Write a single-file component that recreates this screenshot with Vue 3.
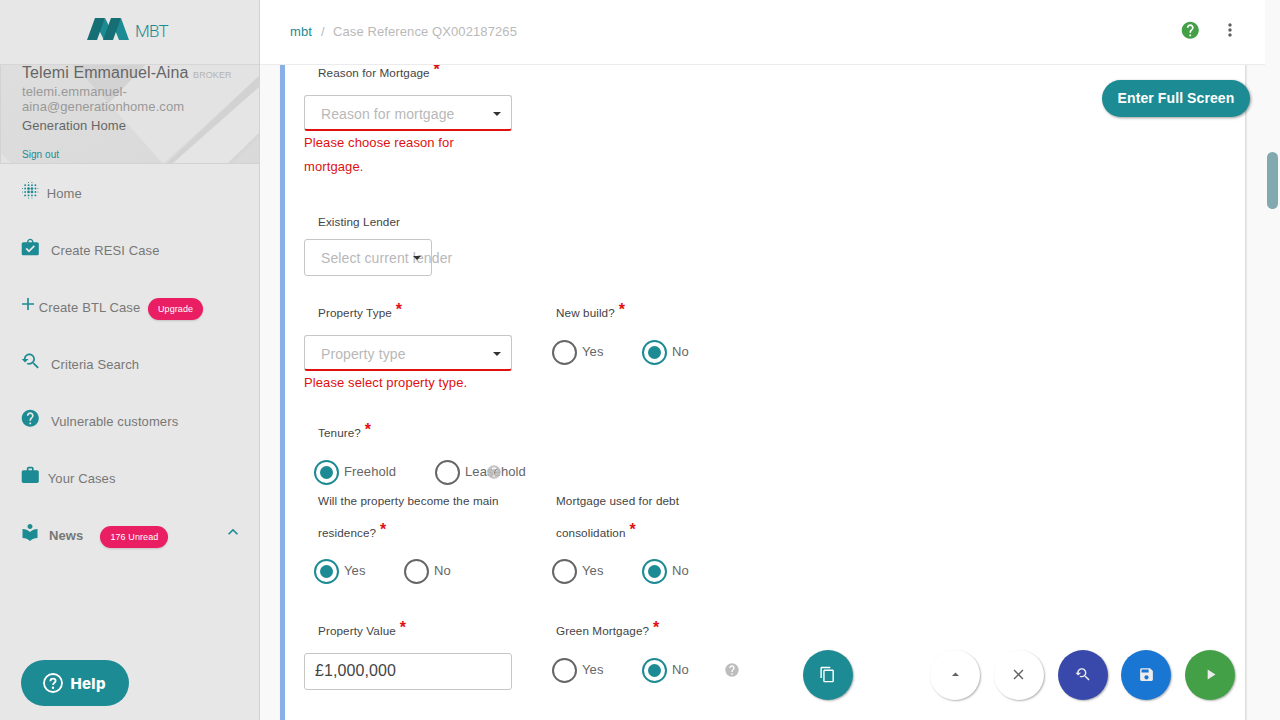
<script setup>
import { h } from 'vue'

const paths = {
  help: 'M12 2C6.48 2 2 6.48 2 12s4.48 10 10 10 10-4.48 10-10S17.52 2 12 2zm1 17h-2v-2h2v2zm2.07-7.75l-.9.92C13.45 12.9 13 13.5 13 15h-2v-.5c0-1.1.45-2.1 1.17-2.83l1.24-1.26c.37-.36.59-.86.59-1.41 0-1.1-.9-2-2-2s-2 .9-2 2H8c0-2.21 1.79-4 4-4s4 1.79 4 4c0 .88-.36 1.68-.93 2.25z',
  copy: 'M16 1H4c-1.1 0-2 .9-2 2v14h2V3h12V1zm3 4H8c-1.1 0-2 .9-2 2v14c0 1.1.9 2 2 2h11c1.1 0 2-.9 2-2V7c0-1.1-.9-2-2-2zm0 16H8V7h11v14z',
  close: 'M19 6.41L17.59 5 12 10.59 6.41 5 5 6.41 10.59 12 5 17.59 6.41 19 12 13.41 17.59 19 19 17.59 13.41 12z',
  save: 'M17 3H5c-1.11 0-2 .9-2 2v14c0 1.1.89 2 2 2h14c1.1 0 2-.9 2-2V7l-4-4zm-5 16c-1.66 0-3-1.34-3-3s1.34-3 3-3 3 1.34 3 3-1.34 3-3 3zm3-10H5V5h10v4z',
  play: 'M8 5v14l11-7z',
  up: 'M7 14l5-5 5 5z',
  more: 'M12 8c1.1 0 2-.9 2-2s-.9-2-2-2-2 .9-2 2 .9 2 2 2zm0 2c-1.1 0-2 .9-2 2s.9 2 2 2 2-.9 2-2-.9-2-2-2zm0 6c-1.1 0-2 .9-2 2s.9 2 2 2 2-.9 2-2-.9-2-2-2z',
  work: 'M20 6h-4V4c0-1.11-.89-2-2-2h-4c-1.11 0-2 .89-2 2v2H4c-1.11 0-1.99.89-1.99 2L2 19c0 1.11.89 2 2 2h16c1.11 0 2-.89 2-2V8c0-1.11-.89-2-2-2zm-6 0h-4V4h4v2z',
  workCheck: 'M20 6h-4.1C15.6 3.7 14 2 12 2S8.400 3.700 8.100 6H4c-1.100 0-2 .9-2 2v11.500c0 1.100.9 2 2 2h16c1.100 0 2-.9 2-2V8c0-1.100-.9-2-2-2zM12 3.600c1.100 0 2 .9 2.200 2.400H9.800C10 4.500 10.900 3.600 12 3.600zM10.500 18L6.500 14l1.400-1.400 2.600 2.600 5.600-5.600L17.500 11z',
  library: 'M12 11.550C9.640 9.350 6.480 8 3 8v11c3.480 0 6.640 1.350 9 3.550 2.360-2.190 5.520-3.550 9-3.550V8c-3.480 0-6.640 1.350-9 3.550zM12 8c1.660 0 3-1.340 3-3s-1.340-3-3-3-3 1.340-3 3 1.340 3 3 3z',
  less: 'M12 8l-6 6 1.410 1.410L12 10.830l4.590 4.580L18 14z',
  add: 'M20 13.100h-6.900V20h-2.200v-6.900H4v-2.200h6.900V4h2.200v6.900H20z',
  search: 'M17.01 14h-.8l-.27-.27c.98-1.14 1.57-2.61 1.57-4.23 0-3.59-2.91-6.5-6.5-6.5s-6.5 3-6.5 6.5H2l3.84 4 4.16-4H6.51C6.51 7 8.53 5 11.01 5s4.500 2.010 4.500 4.500c0 2.480-2.020 4.500-4.500 4.500-.65 0-1.260-.14-1.820-.38L7.710 15.100c.97.57 2.090.9 3.300.9 1.610 0 3.080-.59 4.220-1.570l.27.27v.79l5.010 4.990L22 19l-4.990-5z'
}

const blurDots = []
const axis = [3, 6, 10, 14, 18, 21]
axis.forEach((x, i) => axis.forEach((y, j) => {
  const ei = i === 0 || i === 5
  const ej = j === 0 || j === 5
  const mi = i === 2 || i === 3
  const mj = j === 2 || j === 3
  if ((ei && ej) || (ei && !mj) || (ej && !mi)) return
  blurDots.push({ x, y, r: ei || ej ? 0.6 : mi && mj ? 1.6 : 1.1 })
}))

const Icon = (props) => h('svg', { viewBox: '0 0 24 24', class: 'icon', 'aria-hidden': 'true' },
  props.name === 'blur'
    ? blurDots.map((d) => h('circle', { cx: d.x, cy: d.y, r: d.r }))
    : [h('path', { d: paths[props.name], 'fill-rule': 'evenodd' })])
Icon.props = ['name']

const Radio = (props) => h('span', { class: ['radio', { on: props.on }] }, [h('i'), h('span', props.text)])
Radio.props = { on: Boolean, text: String }

const nav = [
  { icon: 'blur', text: 'Home', gap: 6 },
  { icon: 'workCheck', text: 'Create RESI Case', gap: 10.2 },
  { icon: 'add', text: 'Create BTL Case', gap: 1.5, badge: 'Upgrade' },
  { icon: 'search', text: 'Criteria Search', gap: 10.2 },
  { icon: 'help', text: 'Vulnerable customers', gap: 10.2 },
  { icon: 'work', text: 'Your Cases', gap: 7 },
  { icon: 'library', text: 'News', gap: 9.5, badge: '176 Unread', open: true }
]
</script>

<template>
  <div class="app">
    <aside class="side">
      <div class="brand">
        <svg class="logo" viewBox="0 0 42 22">
          <path fill="#1c8b93" d="M18 0L22 8L17 22L12 12zM34 0L42 22H32L28 12z" />
          <path fill="#176f76" d="M8 0H18L10 22H0zM24 0H34L26 22H16z" />
        </svg>
        <span>MBT</span>
      </div>
      <div class="profile">
        <svg class="profile-bg" viewBox="0 0 259 99" preserveAspectRatio="none">
          <defs>
            <linearGradient id="pg" x1="0" y1="0" x2="1" y2="1">
              <stop offset="0" stop-color="#dedede" /><stop offset="1" stop-color="#d9d9d9" />
            </linearGradient>
          </defs>
          <rect width="259" height="99" fill="url(#pg)" />
          <path fill="#e3e3e3" d="M145 0H259V11L163 99L109 38z" />
          <path fill="#d3d3d3" d="M73 0H145L109 38z" />
          <path fill="#d2d2d2" d="M166 99L259 11V22L172 99z" />
          <path fill="#e5e5e5" d="M172 99L259 22V68L227 99z" />
          <path fill="#d6d6d6" d="M227 99L259 68V72L232 99z" />
          <path fill="#e3e3e3" d="M0 87L12 99H0z" />
          <path fill="none" stroke="#d2d2d2" d="M0 98.500H259M.5 0V99" />
        </svg>
        <div class="name">Telemi Emmanuel-Aina <small>BROKER</small></div>
        <div class="email">telemi.emmanuel-<br>aina@generationhome.com</div>
        <div class="company">Generation Home</div>
        <div class="signout">Sign out</div>
      </div>
      <nav>
        <div v-for="n in nav" :key="n.text" class="nav-row" :class="[n.icon, { open: n.open }]">
          <Icon :name="n.icon" />
          <span class="nav-text" :style="{ marginLeft: n.gap + 'px' }">{{ n.text }}</span>
          <span v-if="n.badge" class="badge">{{ n.badge }}</span>
          <Icon v-if="n.open" name="less" class="chev" />
        </div>
      </nav>
      <div class="help-btn">
        <svg viewBox="0 0 20 20"><circle cx="10" cy="10" r="9" /><path d="M7.400 8.200C7.400 6.600 8.500 5.700 10 5.700S12.600 6.700 12.600 8C12.600 9.800 10 9.900 10 12" /><circle class="dot" cx="10" cy="14.800" r="1.200" /></svg>
        <span>Help</span>
      </div>
    </aside>

    <div class="main">
      <header class="top">
        <span class="crumb">mbt</span><span class="slash">/</span><span class="ref">Case Reference QX002187265</span>
        <Icon name="help" class="top-help" />
        <Icon name="more" class="top-more" />
      </header>
      <div class="view">
        <section class="card">
          <div class="row r1">
            <div class="field">
              <label>Reason for Mortgage <b>*</b></label>
              <div class="select bad">Reason for mortgage<i class="caret"></i></div>
              <p>Please choose reason for mortgage.</p>
            </div>
          </div>
          <div class="row r2">
            <div class="field">
              <label>Existing Lender</label>
              <div class="select small">Select current lender<i class="caret"></i></div>
            </div>
          </div>
          <div class="row r3">
            <div class="field">
              <label>Property Type <b>*</b></label>
              <div class="select bad">Property type<i class="caret"></i></div>
              <p>Please select property type.</p>
            </div>
            <div class="field">
              <label>New build? <b>*</b></label>
              <div class="radios"><Radio text="Yes" /><Radio text="No" on /></div>
            </div>
          </div>
          <div class="row r4">
            <div class="field">
              <label>Tenure? <b>*</b></label>
              <div class="radios wide"><Radio text="Freehold" on /><Radio text="Leasehold" /><Icon name="help" class="hint over" /></div>
            </div>
          </div>
          <div class="row r5">
            <div class="field">
              <label>Will the property become the main residence? <b>*</b></label>
              <div class="radios tight"><Radio text="Yes" on /><Radio text="No" /></div>
            </div>
            <div class="field">
              <label class="narrow">Mortgage used for debt consolidation <b>*</b></label>
              <div class="radios tight"><Radio text="Yes" /><Radio text="No" on /></div>
            </div>
          </div>
          <div class="row r6">
            <div class="field">
              <label>Property Value <b>*</b></label>
              <div class="input">£1,000,000</div>
            </div>
            <div class="field">
              <label>Green Mortgage? <b>*</b></label>
              <div class="radios"><Radio text="Yes" /><Radio text="No" on /><Icon name="help" class="hint" /></div>
            </div>
          </div>
        </section>
      </div>
    </div>
    <div class="track"><div class="thumb"></div></div>

    <button class="full">Enter Full Screen</button>
    <div class="fabs">
      <span class="fab teal"><Icon name="copy" /></span>
      <span class="fab light"><Icon name="up" /></span>
      <span class="fab light"><Icon name="close" /></span>
      <span class="fab indigo"><Icon name="search" /></span>
      <span class="fab blue"><Icon name="save" /></span>
      <span class="fab green"><Icon name="play" /></span>
    </div>
  </div>
</template>

<style>
body { margin: 0; overflow: hidden; }
.icon { display: block; flex: none; fill: currentColor; }
.radio { display: flex; align-items: center; width: 90px; flex: none; font-size: 13px; color: #666; white-space: nowrap; }
.radio i { box-sizing: border-box; width: 25px; height: 25px; flex: none; margin-right: 5px; border: 2px solid #666; border-radius: 50%; display: flex; align-items: center; justify-content: center; }
.radio.on i { border-color: #1c8b93; }
.radio.on i::after { content: ''; width: 13px; height: 13px; border-radius: 50%; background: #1c8b93; }
.radio span { position: relative; top: -1px; }
</style>

<style scoped>
.app { position: relative; display: flex; width: 1280px; height: 720px; overflow: hidden; background: #f9f9f9; font-family: "Liberation Sans", Arial, sans-serif; font-size: 13px; letter-spacing: 0.1px; color: #666; }
.side { box-sizing: border-box; position: relative; width: 260px; flex: none; background: #e7e7e7; border-right: 1px solid #d2d2d2; }
.brand { box-sizing: border-box; height: 65px; padding: 18px 0 0 87px; display: flex; align-items: flex-start; color: #1c8b93; border-bottom: 1px solid #d6d6d6; }
.logo { width: 42px; height: 22px; }
.brand span { margin: 3px 0 0 6px; font: 300 17px/20px Roboto, "Liberation Sans", sans-serif; letter-spacing: -0.7px; }
.profile { position: relative; box-sizing: border-box; height: 99px; padding-left: 22px; overflow: hidden; }
.profile-bg { position: absolute; left: 0; top: 0; width: 259px; height: 99px; }
.profile > div { position: relative; white-space: nowrap; }
.name { font-size: 16px; line-height: 18px; margin-top: -1px; letter-spacing: 0.1px; color: #666; }
.name small { font-size: 9px; color: #b4b4b4; letter-spacing: 0.1px; }
.email { line-height: 15px; margin-top: 0; color: #999; }
.company { line-height: 18px; margin-top: 3px; }
.signout { font-size: 10px; line-height: 12px; margin-top: 14px; color: #1c8b93; letter-spacing: 0.05px; }
.nav-row { display: flex; align-items: center; height: 57px; padding-left: 20.300px; color: #777; }
.nav-row .icon { width: 20.500px; height: 20.500px; margin-top: -5px; color: #1c8b93; }
.nav-row.add .icon { width: 18px; height: 18px; margin-left: -1px; margin-top: -5px; }
.nav-row.library .icon { width: 20px; margin-left: -0.800px; }
.nav-text { position: relative; top: 1px; line-height: 16px; }
.nav-row.open .nav-text { font-weight: bold; }
.badge { margin: 5px 0 0 8px; padding: 0 10px 0 9.700px; height: 22px; line-height: 22px; border-radius: 11px; background: #e91e63; color: #fff; font-size: 9px; box-shadow: 0 1px 2px rgba(0,0,0,.15); }
.open .badge { margin-left: 17px; padding: 0 10px; }
.nav-row.open .chev { width: 20px; height: 20px; margin: -5px 16px 0 auto; }
.help-btn { position: absolute; left: 21px; top: 660px; width: 108px; height: 46px; border-radius: 23px; background: #1c8b93; color: #fff; display: flex; align-items: center; box-sizing: border-box; padding-left: 22px; font: 800 15px Inter, sans-serif; letter-spacing: 0.3px; }
.help-btn svg { width: 20px; height: 20px; margin-right: 7.500px; fill: none; stroke: #fff; stroke-width: 1.800; }
.help-btn svg .dot { fill: #fff; stroke: none; }
.main { width: 1005px; flex: none; display: flex; flex-direction: column; }
.top { box-sizing: border-box; height: 65px; flex: none; padding: 0 0 2px 30px; display: flex; align-items: center; background: #fff; border-bottom: 1px solid #ebebeb; color: #b9b9b9; }
.crumb { color: #1c8b93; }
.slash { margin: 0 8.300px 0 9px; }
.top-help { width: 20.500px; height: 20.500px; margin: -2px 20px 0 auto; color: #43a047; }
.top-more { width: 20px; height: 20px; margin: -2px 25px 0 0; color: #616161; }
.view { flex: 1; overflow: hidden; padding-left: 20px; }
.card { box-sizing: border-box; width: 965px; height: 700px; margin-top: -8px; border-left: 5px solid #8aafe6; padding-left: 19px; background: #fff; box-shadow: 1px 0 2px rgba(0,0,0,.17); }
.row { display: flex; }
.r1 { height: 149px; }
.r2 { height: 91px; }
.r3 { height: 120px; }
.r4 { height: 68px; }
.r5 { height: 130px; }
.field { width: 238px; flex: none; }
label { display: block; padding: 0 30px 0 14px; font-size: 11.700px; line-height: 32px; color: #444; }
label.narrow { padding-right: 60px; }
label b { font-size: 16px; font-weight: bold; line-height: 0; vertical-align: 2px; margin-left: 0.500px; color: #e31010; }
.select, .input { position: relative; box-sizing: border-box; width: 208px; height: 36px; margin-top: 6px; padding-left: 16px; border: 1px solid #c6c6c6; border-radius: 3px; line-height: 36px; font-size: 14px; color: #b8b8b8; white-space: nowrap; }
.select.bad { border-bottom: 2px solid #e31010; }
.select.small { width: 128px; height: 37px; margin-top: 1px; }
.caret { position: absolute; right: 10px; top: 16px; border: 4.500px solid transparent; border-top-color: #333; border-bottom: 0; }
.input { height: 37px; padding-left: 10px; line-height: 34px; font-size: 16px; color: #444; }
p { width: 190px; margin: 0; line-height: 24px; color: #e01010; }
.radios { position: relative; display: flex; align-items: center; height: 25px; margin-top: 11px; padding-left: 10px; }
.radios.tight { margin-top: 10px; }
.radios.wide .radio { width: 121px; }
.hint { width: 16px; height: 16px; margin: -1px 0 0 -8px; color: #bdbdbd; }
.hint.over { position: absolute; left: 182px; top: 4px; margin: 0; opacity: .9; }
.track { flex: 1; padding: 152px 0 0 2px; }
.thumb { width: 11px; height: 57px; border-radius: 5.500px; background: #82a8b0; }
.full { position: absolute; left: 1102px; top: 80px; width: 148px; height: 37px; padding: 0 0 2px; border: 0; border-radius: 19px; background: #1c8b93; color: #fff; font: bold 14px "Liberation Sans", Arial, sans-serif; letter-spacing: 0.1px; box-shadow: 1px 1px 3px rgba(0,0,0,.4); }
.fabs { position: absolute; right: 45px; bottom: 20px; display: flex; gap: 13.700px; }
.fab { width: 50px; height: 50px; border-radius: 50%; display: flex; align-items: center; justify-content: center; color: #ececec; box-shadow: 1px 1px 2px rgba(0,0,0,.3); }
.fab .icon { width: 17px; height: 17px; margin-top: -1px; }
.teal { background: #1c8b93; margin-right: 64px; color: #fff; }
.light { background: #fff; color: #616161; }
.indigo { background: #3949ab; }
.blue { background: #1976d2; }
.green { background: #43a047; }
</style>
